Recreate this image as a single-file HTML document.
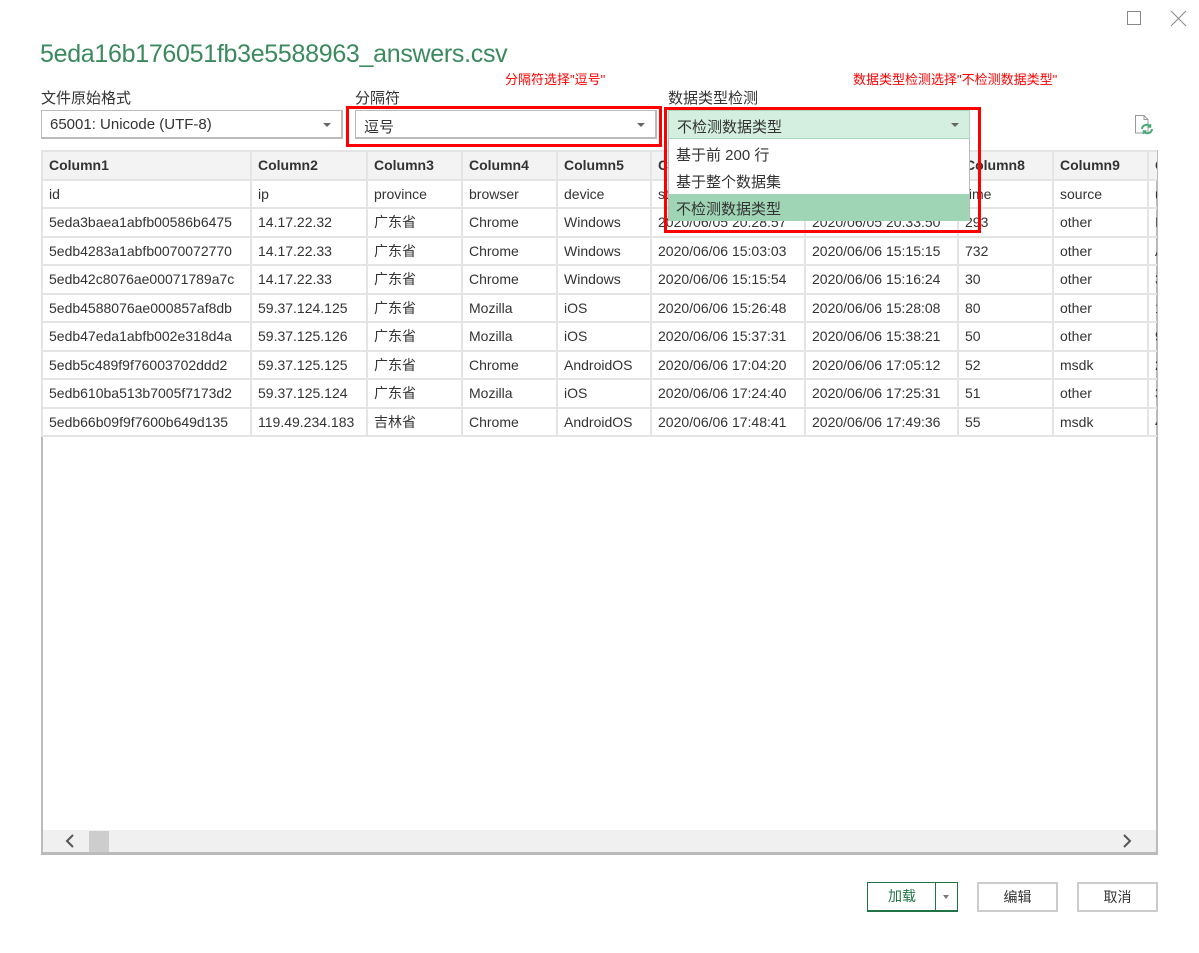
<!DOCTYPE html>
<html><head><meta charset="utf-8"><style>
*{margin:0;padding:0;box-sizing:border-box}
body{width:1199px;height:953px;background:#fff;position:relative;overflow:hidden;font-family:"Liberation Sans","Noto Sans CJK SC",sans-serif;color:#333}
.a{position:absolute}
.title{left:40px;top:40px;font-size:25px;color:#3a8a5e;letter-spacing:-0.3px}
.lbl{font-size:15px;color:#333;top:87px}
.red{color:#f00;font-size:13px}
.combo{height:29px;border:1px solid #bbb;border-width:1px 2px 2px 1px;font-size:15px;padding:5px 0 0 8px;background:#fff}
.combo .arr{position:absolute;right:10px;top:12px;width:0;height:0;border-left:4px solid transparent;border-right:4px solid transparent;border-top:4px solid #666}
.rbox{border:3px solid #f00}
.clip{left:41px;top:150px;width:1116px;height:300px;overflow:hidden}
table{position:absolute;left:0;top:0;border-collapse:collapse;table-layout:fixed;width:1146px;min-width:1146px}
td{border:2px solid #e4e4e4;height:28.5px;font-size:14px;padding:0 0 0 6px;white-space:nowrap;overflow:hidden;color:#333}
tr.h td{background:#f3f3f3;font-weight:bold;color:#333}
.frame{left:41px;top:150px;width:1117px;height:705px;border:2px solid #bbb;border-bottom-width:3px}
.btn{top:882px;height:30px;border:2px solid #ccc;font-size:14px;text-align:center;line-height:26px;background:#fff}
</style></head><body>
<div class="a" style="left:1127px;top:11px;width:14px;height:14px;border:1px solid #888"></div>
<svg class="a" style="left:1170px;top:10px" width="17" height="17"><path d="M1 1L16 16M16 1L1 16" stroke="#888" stroke-width="1"/></svg>
<div class="a title">5eda16b176051fb3e5588963_answers.csv</div>
<div class="a lbl" style="left:41px">文件原始格式</div>
<div class="a lbl" style="left:355px">分隔符</div>
<div class="a lbl" style="left:668px">数据类型检测</div>
<div class="a red" style="left:505px;top:69px">分隔符选择"逗号"</div>
<div class="a red" style="left:853px;top:69px">数据类型检测选择"不检测数据类型"</div>
<div class="a combo" style="left:41px;top:110px;width:302px">65001: Unicode (UTF-8)<span class="arr"></span></div>
<div class="a combo" style="left:355px;top:110px;width:302px">逗号<span class="arr"></span></div>
<div class="a rbox" style="left:346px;top:106px;width:316px;height:41px"></div>
<svg class="a" style="left:1134px;top:114px" width="22" height="22"><path d="M1.5 1.5H10L14 5.5V19H1.5Z M10 1.5V5.5H14" fill="#fff" stroke="#999" stroke-width="1"/><path d="M8 15a4.5 4.5 0 0 1 8-2.5M18 15a4.5 4.5 0 0 1-8 2.5" fill="none" stroke="#4aaa78" stroke-width="2"/><path d="M16.5 10v3h-3M9.5 20v-3h3" fill="none" stroke="#4aaa78" stroke-width="1.5"/></svg>

<div class="a frame"></div>
<div class="a clip">
<table>
<colgroup><col style="width:209px"><col style="width:116px"><col style="width:95px"><col style="width:95px"><col style="width:94px"><col style="width:154px"><col style="width:153px"><col style="width:95px"><col style="width:95px"><col style="width:40px"></colgroup>
<tr class="h"><td>Column1</td><td>Column2</td><td>Column3</td><td>Column4</td><td>Column5</td><td>Column6</td><td>Column7</td><td>Column8</td><td>Column9</td><td>C</td></tr>
<tr><td>id</td><td>ip</td><td>province</td><td>browser</td><td>device</td><td>start</td><td>end</td><td>time</td><td>source</td><td>u</td></tr>
<tr><td>5eda3baea1abfb00586b6475</td><td>14.17.22.32</td><td>广东省</td><td>Chrome</td><td>Windows</td><td>2020/06/05 20:28:57</td><td>2020/06/05 20:33:50</td><td>293</td><td>other</td><td>I</td></tr>
<tr><td>5edb4283a1abfb0070072770</td><td>14.17.22.33</td><td>广东省</td><td>Chrome</td><td>Windows</td><td>2020/06/06 15:03:03</td><td>2020/06/06 15:15:15</td><td>732</td><td>other</td><td>A</td></tr>
<tr><td>5edb42c8076ae00071789a7c</td><td>14.17.22.33</td><td>广东省</td><td>Chrome</td><td>Windows</td><td>2020/06/06 15:15:54</td><td>2020/06/06 15:16:24</td><td>30</td><td>other</td><td>3</td></tr>
<tr><td>5edb4588076ae000857af8db</td><td>59.37.124.125</td><td>广东省</td><td>Mozilla</td><td>iOS</td><td>2020/06/06 15:26:48</td><td>2020/06/06 15:28:08</td><td>80</td><td>other</td><td>1</td></tr>
<tr><td>5edb47eda1abfb002e318d4a</td><td>59.37.125.126</td><td>广东省</td><td>Mozilla</td><td>iOS</td><td>2020/06/06 15:37:31</td><td>2020/06/06 15:38:21</td><td>50</td><td>other</td><td>9</td></tr>
<tr><td>5edb5c489f9f76003702ddd2</td><td>59.37.125.125</td><td>广东省</td><td>Chrome</td><td>AndroidOS</td><td>2020/06/06 17:04:20</td><td>2020/06/06 17:05:12</td><td>52</td><td>msdk</td><td>2</td></tr>
<tr><td>5edb610ba513b7005f7173d2</td><td>59.37.125.124</td><td>广东省</td><td>Mozilla</td><td>iOS</td><td>2020/06/06 17:24:40</td><td>2020/06/06 17:25:31</td><td>51</td><td>other</td><td>3</td></tr>
<tr><td>5edb66b09f9f7600b649d135</td><td>119.49.234.183</td><td>吉林省</td><td>Chrome</td><td>AndroidOS</td><td>2020/06/06 17:48:41</td><td>2020/06/06 17:49:36</td><td>55</td><td>msdk</td><td>4</td></tr>
</table>
</div>
<div class="a" style="left:43px;top:830px;width:1113px;height:22px;background:#f0f0f0"></div>
<div class="a" style="left:89px;top:831px;width:20px;height:21px;background:#cdcdcd"></div>
<svg class="a" style="left:64px;top:834px" width="12" height="14"><path d="M9 1L3 7L9 13" fill="none" stroke="#555" stroke-width="2"/></svg>
<svg class="a" style="left:1121px;top:834px" width="12" height="14"><path d="M3 1L9 7L3 13" fill="none" stroke="#555" stroke-width="2"/></svg>

<div class="a" style="left:668px;top:110px;width:302px;height:111px;background:#fff;border:1px solid #bbb"></div>
<div class="a" style="left:668px;top:110px;width:302px;height:29px;background:#d4efe0;border:1px solid #a9d7bd;font-size:15px;padding:5px 0 0 8px">不检测数据类型<span style="position:absolute;right:10px;top:12px;border-left:4px solid transparent;border-right:4px solid transparent;border-top:4px solid #666"></span></div>
<div class="a" style="left:676px;top:144px;font-size:15px">基于前 200 行</div>
<div class="a" style="left:676px;top:171px;font-size:15px">基于整个数据集</div>
<div class="a" style="left:669px;top:194px;width:300px;height:27px;background:#9fd4b5;font-size:15px;padding:4px 0 0 7px">不检测数据类型</div>
<div class="a rbox" style="left:664px;top:107px;width:317px;height:126px"></div>

<div class="a btn" style="left:867px;width:91px;border-color:#217346;border-width:1px 1px 2px 1px;color:#217346">
<span style="position:absolute;left:0;width:68px">加载</span><span style="position:absolute;left:67px;top:0;width:1px;height:28px;background:#217346"></span><span style="position:absolute;left:75px;top:12px;border-left:3px solid transparent;border-right:3px solid transparent;border-top:4px solid #777"></span></div>
<div class="a btn" style="left:977px;width:81px">编辑</div>
<div class="a btn" style="left:1077px;width:81px">取消</div>
</body></html>
